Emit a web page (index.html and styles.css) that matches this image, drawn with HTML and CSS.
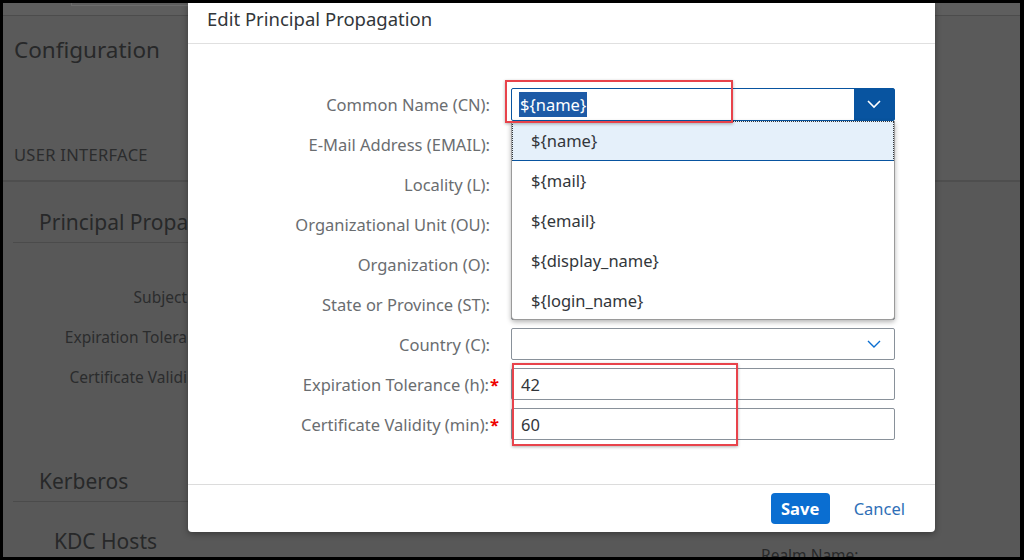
FILE: index.html
```html
<!DOCTYPE html>
<html>
<head>
<meta charset="utf-8">
<link rel="stylesheet" href="styles.css">
</head>
<body>
<div class="screen">
  <div class="page">
    <div class="topbar"><div class="tab"></div></div>
    <h1 class="page-title">Configuration</h1>
    <div class="section-label">USER INTERFACE</div>
    <div class="section">
      <h2 class="sec-title">Principal Propa<span class="cut">gation</span></h2>
      <div class="bg-form">
        <div class="bg-row">Subject</div>
        <div class="bg-row">Expiration Tolera</div>
        <div class="bg-row">Certificate Validi</div>
      </div>
      <h2 class="sec-title sec-title2">Kerberos</h2>
      <div class="bg-bottom">
        <div class="sub-title">KDC Hosts</div>
        <div class="realm">Realm Name:</div>
      </div>
    </div>
  </div>

  <div class="modal">
    <div class="modal-head">Edit Principal Propagation</div>
    <div class="modal-body">
      <div class="form">
        <label class="lbl">Common Name (CN):</label>
        <div class="combo focused">
          <span class="val"><span class="sel">${name}</span></span>
          <span class="combo-btn"><svg width="16" height="10" viewBox="0 0 16 10"><path d="M2 2 L8 8 L14 2" fill="none" stroke="#fff" stroke-width="1.6"/></svg></span>
        </div>
        <label class="lbl">E-Mail Address (EMAIL):</label>
        <div class="input"></div>
        <label class="lbl">Locality (L):</label>
        <div class="input"></div>
        <label class="lbl">Organizational Unit (OU):</label>
        <div class="input"></div>
        <label class="lbl">Organization (O):</label>
        <div class="input"></div>
        <label class="lbl">State or Province (ST):</label>
        <div class="input"></div>
        <label class="lbl">Country (C):</label>
        <div class="input combo-plain"><span class="val"></span><span class="chev"><svg width="16" height="10" viewBox="0 0 16 10"><path d="M2 2 L8 8 L14 2" fill="none" stroke="#0a6ed1" stroke-width="1.4"/></svg></span></div>
        <label class="lbl">Expiration Tolerance (h):<span class="req">*</span></label>
        <div class="input"><span class="val">42</span></div>
        <label class="lbl">Certificate Validity (min):<span class="req">*</span></label>
        <div class="input"><span class="val">60</span></div>
      </div>
      <ul class="dropdown">
        <li class="item active">${name}</li>
        <li class="item">${mail}</li>
        <li class="item">${email}</li>
        <li class="item">${display_name}</li>
        <li class="item">${login_name}</li>
      </ul>
      <div class="mark mark1"></div>
      <div class="mark mark2"></div>
    </div>
    <div class="modal-foot">
      <button class="btn-save">Save</button>
      <button class="btn-cancel">Cancel</button>
    </div>
  </div>
</div>
</body>
</html>
```

FILE: styles.css
```css
* { box-sizing: border-box; }
html, body { margin: 0; padding: 0; }
body {
  background: #000;
  width: 1024px;
  height: 560px;
  overflow: hidden;
  font-family: "Noto Sans", "Open Sans", sans-serif;
}
.screen {
  position: relative;
  margin: 3px 4px 3px 3px;
  width: 1017px;
  height: 554px;
  overflow: hidden;
  background: #5a5a5a;
}
.page { color: #272829; }
.topbar {
  height: 13px;
  border-bottom: 1px solid #4c4c4c;
  background: #5e5e5e;
}
.tab {
  margin-left: 68px;
  width: 125px;
  height: 3px;
  border: 1px solid #6d6d6d;
  border-top: none;
}
.page-title {
  margin: 19px 0 0 11px;
  font-size: 22.5px;
  font-weight: 400;
  line-height: 30px;
}
.section-label {
  margin: 80px 0 0 11px;
  font-size: 16.5px;
  letter-spacing: 0.3px;
  line-height: 20px;
  color: #2b2c2d;
}
.section {
  margin-top: 15px;
  border-top: 2px solid #4e4e4e;
  background: #585858;
  height: 400px;
}
.sec-title {
  margin: 0 0 0 10px;
  padding: 26px 0 6px 26px;
  font-size: 21px;
  font-weight: 400;
  line-height: 28px;
  border-bottom: 1px solid #4b4b4b;
  width: 180px;
}
.cut { display: none; }
.bg-form { padding-top: 44px; }
.bg-row {
  width: 184px;
  text-align: right;
  font-size: 15.5px;
  line-height: 20px;
  margin-bottom: 20px;
  color: #2b2c2d;
}
.sec-title2 { padding-top: 60px; }
.bg-bottom { display: flex; padding-top: 25px; }
.sub-title { margin-left: 51px; font-size: 21px; line-height: 28px; }
.realm { margin-left: 604px; margin-top: 18px; font-size: 15.5px; line-height: 20px; white-space: nowrap; }

.modal {
  position: absolute;
  left: 185px;
  top: 0;
  width: 747px;
  height: 529px;
  background: #fff;
  border-radius: 0 0 4px 4px;
  box-shadow: 0 2px 6px rgba(0,0,0,0.35);
  display: flex;
  flex-direction: column;
}
.modal-head {
  height: 41px;
  border-bottom: 1px solid #e0e0e0;
  padding-left: 19px;
  font-size: 18.5px;
  line-height: 32px;
  color: #32363a;
}
.modal-body {
  position: relative;
  flex: 1;
  padding-top: 40px;
  border-bottom: 1px solid #dcdcdc;
}
.form {
  display: grid;
  grid-template-columns: 302px 384px;
  grid-auto-rows: 40px;
  column-gap: 21px;
  align-items: center;
}
.lbl {
  text-align: right;
  font-size: 16.5px;
  color: #6a6d70;
  white-space: nowrap;
}
.req { color: #e00; font-weight: 700; margin-left: 1px; margin-right: -9px; }
.input, .combo {
  height: 32px;
  border: 1px solid #89919a;
  border-radius: 2px;
  display: flex;
  align-items: center;
  background: #fff;
}
.combo { height: 33px; border-color: #0854a0; }
.val {
  flex: 1;
  padding-left: 9px;
  font-size: 16.5px;
  color: #32363a;
}
.combo .val { padding-left: 7px; }
.sel {
  background: #1d5aa6;
  color: #fff;
  padding: 1px 1px;
}
.combo-btn {
  width: 40px;
  height: 100%;
  background: #0854a0;
  display: flex;
  align-items: center;
  justify-content: center;
}
.chev {
  width: 40px;
  display: flex;
  align-items: center;
  justify-content: center;
}
.dropdown {
  position: absolute;
  left: 323px;
  top: 77px;
  width: 384px;
  height: 199px;
  margin: 0;
  padding: 0;
  list-style: none;
  background: #fff;
  border: 1px solid #9a9a9a;
  border-top: none;
  border-radius: 0 0 4px 4px;
  box-shadow: 0 2px 5px rgba(0,0,0,0.3);
}
.item {
  height: 40px;
  line-height: 40px;
  padding-left: 19px;
  font-size: 16.5px;
  color: #32363a;
}
.item.active {
  background: #e5f0fa;
  border: 1px dotted #32363a;
  border-bottom: 1px solid #0854a0;
  line-height: 37px;
  padding-left: 18px;
}
.mark {
  position: absolute;
  border: 2px solid #e8434b;
  box-shadow: 0 1px 3px rgba(0,0,0,0.3);
}
.mark1 { left: 317px; top: 36px; width: 228px; height: 43px; }
.mark2 { left: 324px; top: 319px; width: 226px; height: 83px; }
.modal-foot {
  height: 47px;
  display: flex;
  align-items: center;
  justify-content: flex-end;
  padding-right: 30px;
  gap: 24px;
}
.btn-save {
  width: 59px;
  height: 31px;
  padding: 0;
  background: #0a6ed1;
  border: none;
  border-radius: 4px;
  color: #fff;
  font-family: inherit;
  font-weight: 700;
  font-size: 16.5px;
}
.btn-cancel {
  background: none;
  border: none;
  color: #2f6fb7;
  font-family: inherit;
  font-size: 16.5px;
  padding: 0;
}
```
